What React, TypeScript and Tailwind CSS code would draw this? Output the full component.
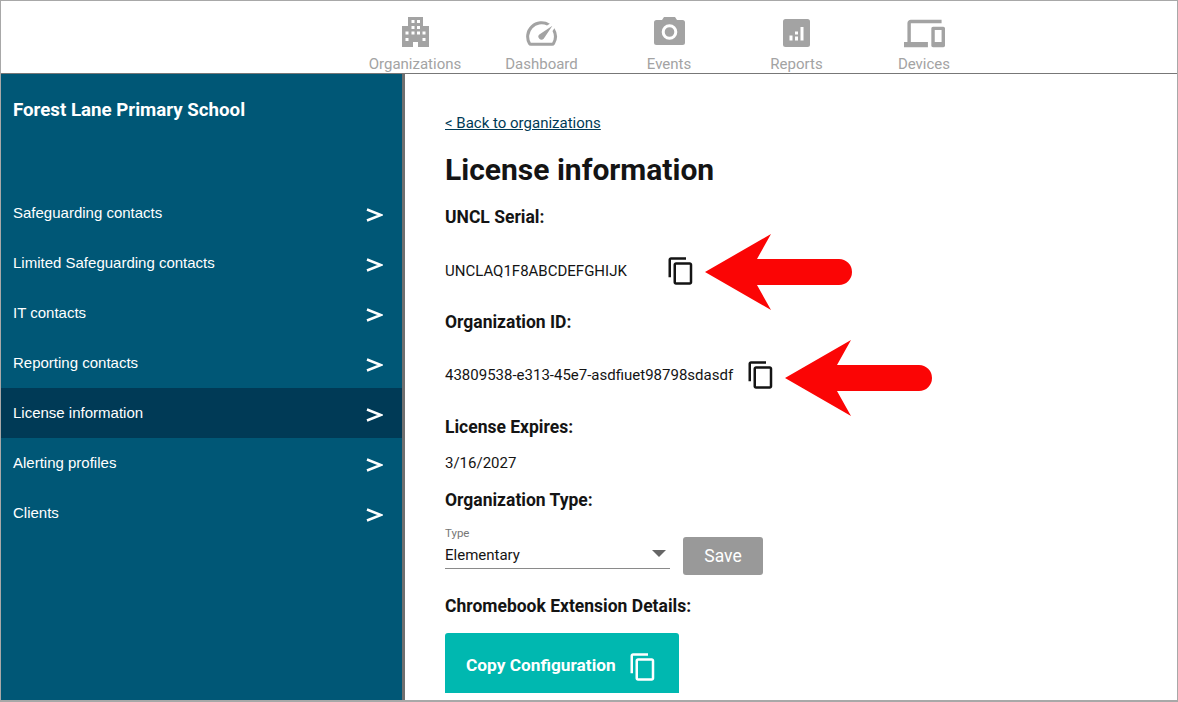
import React from "react";
import { MdSpeed, MdDevices, MdContentCopy } from "react-icons/md";

function BuildingIcon() {
  const holes = [
    [9.5, 3], [15, 3],
    [9.5, 9], [15, 9],
    [3.5, 14.5], [9.5, 14.5], [15, 14.5], [20.5, 14.5],
    [3.5, 21], [20.5, 21],
  ];
  return (
    <svg width="27" height="30" viewBox="0 0 27 30" className="-mt-[2px]">
      <path d="M6 0H21V9H27V30H16V25H11V30H0V9H6Z" fill="#a3a3a3" />
      {holes.map(([x, y]) => (
        <rect key={`${x}-${y}`} x={x} y={y} width="3" height="3" fill="#fff" />
      ))}
    </svg>
  );
}

function CameraIcon() {
  return (
    <svg width="31" height="28" viewBox="0 0 31 28" className="-mt-[4px]">
      <path
        d="M10 0H21L23 3H28.5A2.5 2.5 0 0 1 31 5.5V25.5A2.5 2.5 0 0 1 28.5 28H2.5A2.5 2.5 0 0 1 0 25.5V5.5A2.5 2.5 0 0 1 2.5 3H8Z"
        fill="#a3a3a3"
      />
      <circle cx="15.5" cy="15" r="6.3" fill="none" stroke="#fff" strokeWidth="3" />
    </svg>
  );
}

function ReportsIcon() {
  return (
    <svg width="27" height="28" viewBox="0 0 27 28">
      <rect width="27" height="28" rx="2.5" fill="#a3a3a3" />
      <rect x="6.5" y="16.5" width="3" height="5" fill="#fff" />
      <rect x="12" y="12.5" width="3" height="3" fill="#fff" />
      <rect x="12" y="17.5" width="3" height="4" fill="#fff" />
      <rect x="17.5" y="8" width="3" height="13.5" fill="#fff" />
    </svg>
  );
}

const nav = [
  { label: "Organizations", icon: <BuildingIcon />, w: "w-[126px]" },
  { label: "Dashboard", icon: <MdSpeed size={37} className="shrink-0" />, w: "w-[127px]" },
  { label: "Events", icon: <CameraIcon />, w: "w-[128px]" },
  { label: "Reports", icon: <ReportsIcon />, w: "w-[127px]" },
  { label: "Devices", icon: <MdDevices size={41} className="shrink-0" />, w: "w-[128px]" },
];
const items = [
  "Safeguarding contacts",
  "Limited Safeguarding contacts",
  "IT contacts",
  "Reporting contacts",
  "License information",
  "Alerting profiles",
  "Clients",
];

function Arrow({ className }: { className: string }) {
  return (
    <svg className={className} width="148" height="78" viewBox="0 0 148 78">
      <path d="M0 39 L66 1 L52 26 H134 A13 13 0 0 1 134 52 H52 L66 77 Z" fill="#fb0505" />
    </svg>
  );
}

function Label({ children, className = "" }: { children: React.ReactNode; className?: string }) {
  return <div className={`text-[17.5px] leading-[20px] font-bold text-[#141414] ${className}`}>{children}</div>;
}

export default function App() {
  return (
    <div className="relative flex h-[702px] w-[1178px] flex-col overflow-hidden border-x border-t border-b-2 border-[#a8a8a8] bg-white font-['Roboto',sans-serif]">
      <header className="flex h-[73px] shrink-0 justify-start border-b border-[#777] pl-[351px]">
        {nav.map(({ label, icon, w }) => (
          <div key={label} className={`flex ${w} flex-col items-center pt-[13px] text-[#a3a3a3]`}>
            <div className="flex h-[38px] shrink-0 items-center justify-center">{icon}</div>
            <span className="mt-[3px] text-[15px] leading-[18px]">{label}</span>
          </div>
        ))}
      </header>
      <div className="flex min-h-0 flex-1">
        <aside className="w-[404px] shrink-0 border-r-[3px] border-[#6f6f6f] bg-[#005776] text-white">
          <h1 className="pl-3 pt-[24px] text-[18.7px] font-bold leading-[24px]">Forest Lane Primary School</h1>
          <nav className="mt-[66px]">
            {items.map((t) => (
              <div
                key={t}
                className={`flex h-[50px] items-center justify-between pl-3 pr-[19px] font-['Liberation_Sans',sans-serif] text-[15px] ${
                  t === "License information" ? "bg-[#003a56]" : ""
                }`}
              >
                <span>{t}</span>
                <svg width="17" height="14" viewBox="0 0 17 14" className="mt-[4px]">
                  <path d="M1 1.5 L15 7 L1 12.5" fill="none" stroke="#fff" strokeWidth="2.5" />
                </svg>
              </div>
            ))}
          </nav>
        </aside>
        <main className="min-w-0 flex-1 pl-[40px] text-[#141414]">
          <a className="mt-[39px] block text-[15px] leading-[20px] text-[#003a56] underline">&lt; Back to organizations</a>
          <h2 className="mt-[17px] text-[30px] font-bold leading-[40px]">License information</h2>
          <Label className="mt-[17px]">UNCL Serial:</Label>
          <div className="mt-[29px] flex h-[30px] items-center text-[15px]">
            <span className="w-[221px]">UNCLAQ1F8ABCDEFGHIJK</span>
            <MdContentCopy size={30} className="text-[#141414]" />
          </div>
          <Label className="mt-[26px]">Organization ID:</Label>
          <div className="mt-[28px] flex h-[30px] items-center text-[15px]">
            <span className="w-[301px]">43809538-e313-45e7-asdfiuet98798sdasdf</span>
            <MdContentCopy size={30} className="text-[#141414]" />
          </div>
          <Label className="mt-[27px]">License Expires:</Label>
          <div className="mt-[16px] text-[15px] leading-[20px]">3/16/2027</div>
          <Label className="mt-[17px]">Organization Type:</Label>
          <div className="mt-[18px] flex items-start">
            <div className="w-[225px] border-b border-[#8a8a8a]">
              <div className="-mt-[2px] text-[11.5px] leading-[14px] text-[#777]">Type</div>
              <div className="flex h-[28px] items-center justify-between pr-[4px] pt-[2px] text-[15px]">
                <span>Elementary</span>
                <span className="mb-[4px] h-0 w-0 border-x-[7px] border-t-[7px] border-x-transparent border-t-[#666]" />
              </div>
            </div>
            <button className="ml-[13px] mt-[9px] h-[38px] w-[80px] rounded-[3px] bg-[#999] text-[17.5px] font-normal text-white">Save</button>
          </div>
          <Label className="mt-[21px]">Chromebook Extension Details:</Label>
          <button className="mt-[17px] flex h-[60px] w-[234px] items-start rounded-t-[3px] bg-[#00b8b0] pl-[21px] pt-[17px] text-[17.3px] font-bold leading-[30px] text-white">
            <span>Copy Configuration</span>
            <MdContentCopy size={30} className="ml-[12px] mt-[2px]" />
          </button>
        </main>
      </div>
      <Arrow className="absolute left-[704px] top-[232px]" />
      <Arrow className="absolute left-[784px] top-[338px]" />
    </div>
  );
}
